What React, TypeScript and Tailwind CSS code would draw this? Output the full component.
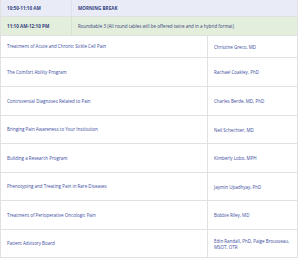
const sessions: [string, string[]][] = [
  ["Treatment of Acute and Chronic Sickle Cell Pain", ["Christine Greco, MD"]],
  ["The Comfort Ability Program", ["Rachael Coakley, PhD"]],
  ["Controversial Diagnoses Related to Pain", ["Charles Berde, MD, PhD"]],
  ["Bringing Pain Awareness to Your Institution", ["Neil Schechter, MD"]],
  ["Building a Research Program", ["Kimberly Lobo, MPH"]],
  ["Phenotyping and Treating Pain in Rare Diseases", ["Jaymin Upadhyay, PhD"]],
  ["Treatment of Perioperative Oncologic Pain", ["Bobbie Riley, MD"]],
  ["Patient Advisory Board", ["Edin Randall, PhD, Paige Brousseau,", "MSOT, OTR"]],
];

const heights = ["h-[22px]", "h-[29px]", "h-[29px]", "h-[28px]", "h-[29px]", "h-[28px]", "h-[29px]", "h-[28px]"];

export default function App() {
  return (
    <div className="w-[300px] h-[260px] bg-white overflow-hidden font-['Open_Sans',sans-serif]">
      <div className="w-[298px] border-l border-r border-[#e1e1e1]">
        <div className="grid grid-cols-[71px_1fr] h-[17px] bg-[#e9ecf7] border-b border-[#e1e1e1] text-[4.6px] font-bold text-[#34427f]">
          <div className="flex items-center pl-[6px] border-r border-[#dfe2ee]">10:50-11:10 AM</div>
          <div className="flex items-center pl-[6px]">MORNING BREAK</div>
        </div>
        <div className="grid grid-cols-[71px_1fr] h-[19px] bg-[#e4eedc] border-b border-[#e1e1e1] text-[#34427f]">
          <div className="flex items-center pl-[6px] border-r border-[#d8e2d0] text-[4.6px] font-bold">11:10 AM-12:10 PM</div>
          <div className="flex items-center pl-[6px] text-[4.5px]">
            Roundtable 3 (All round tables will be offered twice and in a hybrid format)
          </div>
        </div>
        {sessions.map(([title, names], i) => (
          <div
            key={title}
            className={`grid grid-cols-[207px_1fr] ${heights[i]} border-b border-[#e1e1e1] text-[4.5px] text-[#3a4b9e]`}
          >
            <div className="flex items-center pl-[6px] border-r border-[#e1e1e1]">{title}</div>
            <div className="flex flex-col justify-center pl-[6px] leading-[6px]">
              {names.map((n) => (
                <span key={n}>{n}</span>
              ))}
            </div>
          </div>
        ))}
      </div>
    </div>
  );
}
